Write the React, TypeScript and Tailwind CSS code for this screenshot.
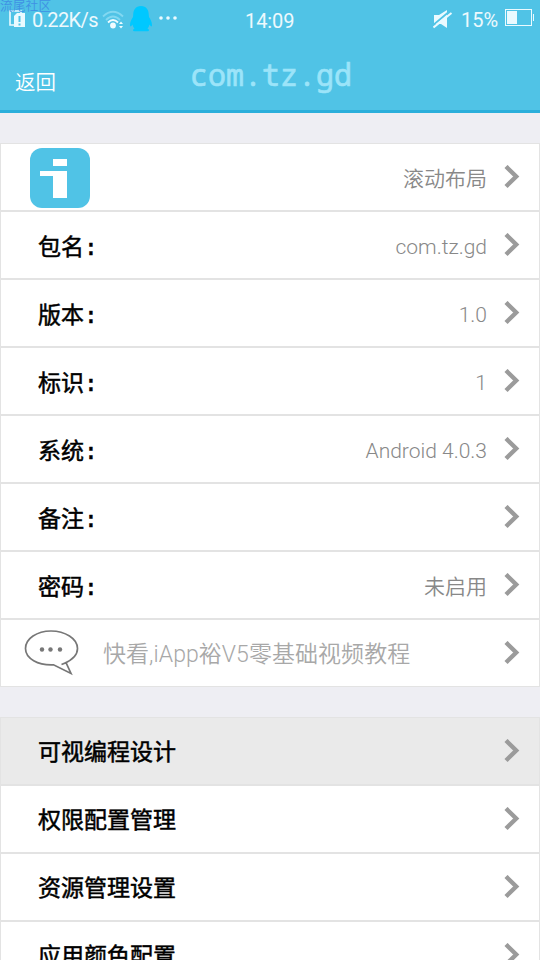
import React from "react";
import clsx from "clsx";

type Row = { label: string; value?: string; active?: boolean };

const infoRows: Row[] = [
  { label: "包名", value: "com.tz.gd" },
  { label: "版本", value: "1.0" },
  { label: "标识", value: "1" },
  { label: "系统", value: "Android 4.0.3" },
  { label: "备注" },
  { label: "密码", value: "未启用" },
];

const menuRows: Row[] = [
  { label: "可视编程设计", active: true },
  { label: "权限配置管理" },
  { label: "资源管理设置" },
  { label: "应用颜色配置" },
];

function Chevron() {
  return (
    <svg className="h-6 w-4 shrink-0" viewBox="0 0 16 24" fill="none" stroke="#9b9b9b" strokeWidth="4.4">
      <path d="M2 1.500 12.200 11.500 2 21.500" />
    </svg>
  );
}

function ListRow({ active, children }: { active?: boolean; children: React.ReactNode }) {
  return (
    <div
      className={clsx(
        "flex h-[68px] shrink-0 items-center border border-[#e3e3e3] pr-[19px]",
        active ? "bg-[#eaeaea]" : "bg-white"
      )}
    >
      {children}
      <Chevron />
    </div>
  );
}

function Label({ children }: { children: React.ReactNode }) {
  return (
    <span className="ml-[37px] flex-1 pt-[4px] text-[23px] leading-7 text-black [-webkit-text-stroke:0.5px_#000]">
      {children}
    </span>
  );
}

function Value({ children }: { children: React.ReactNode }) {
  return <span className="mr-[17px] pt-[4px] text-[21px] leading-7 font-[350] text-[#888]">{children}</span>;
}

function StatusBar() {
  return (
    <div className="relative flex h-10 items-center text-[20px] leading-6 text-white/90">
      {/* SIM card with an alert mark */}
      <svg className="mt-[-3px] ml-[9px] h-[18px] w-[17px]" viewBox="0 0 17 18" fill="none">
        <path d="M12 3V1H1v14h4" stroke="#eafaff" strokeWidth="1.6" />
        <path d="M8 3h8v14H5V6z" fill="#eafaff" />
        <path d="M10.5 6v6M10.5 13.5v2" stroke="#50c3e6" strokeWidth="2" />
      </svg>
      <span className="ml-1.5 w-[68px] whitespace-nowrap tracking-[-0.6px]">0.22K/s</span>
      <svg className="ml-0.5 h-5 w-6" viewBox="0 0 24 20" fill="none">
        <path d="M1 6.5Q11 -3 21 6.5" stroke="#82d8f1" strokeWidth="1.8" />
        <path d="M4 10Q11 3 18 10" stroke="#82d8f1" strokeWidth="1.8" />
        <path d="M6 12.500Q11 7.500 16 12.500" stroke="#f0fcff" strokeWidth="1.8" />
        <circle cx="11" cy="15.5" r="2.9" fill="#f0fcff" />
        <path d="M17 14 19 11.500 21 14zM17 16h4l-2 2.500z" fill="#f0fcff" />
      </svg>
      <svg className="mt-[-3px] ml-[3px] h-[26px] w-6" viewBox="0 0 24 26" fill="#00c8ff">
        <path d="M12 0C6.500 0 4.200 4 4.200 9L4 11C2.500 13 1 16 1 19c0 2 1 2 2.500-.5.300 1.500 1 3 2 4C3.500 23.500 3.500 25.300 5.500 25.300h13c2 0 2-1.800 0-2.800 1-1 1.700-2.500 2-4C22 21 23 21 23 19c0-3-1.500-6-3-8l-.2-2C19.800 4 17.500 0 12 0z" />
      </svg>
      <svg className="mt-[-4px] ml-[5px] h-1 w-5" viewBox="0 0 20 4" fill="#eafaff">
        <circle cx="3" cy="2" r="1.800" />
        <circle cx="10" cy="2" r="1.800" />
        <circle cx="17" cy="2" r="1.800" />
      </svg>
      <span className="ml-[67px] pt-0.5 tracking-[-0.1px]">14:09</span>
      <div className="ml-auto flex items-center pr-[5px]">
        <svg className="mt-[-3px] h-5 w-5" viewBox="0 0 20 20" fill="#eafaff">
          <path d="M1 6h5l8-5v18l-6-4H1z" />
          <path d="M-.5 16.500 17.500 1.500" stroke="#50c3e6" strokeWidth="1.800" />
          <path d="M.5 18.500 18.500 4" stroke="#eafaff" strokeWidth="2" />
        </svg>
        <span className="ml-2 w-[38px] whitespace-nowrap">15%</span>
        <svg className="mt-[-4px] ml-1.5 h-[18px] w-[30px]" viewBox="0 0 30 18" fill="none">
          <rect x="0.500" y="0.500" width="26" height="16" stroke="#eafaff" />
          <rect x="2" y="2" width="10" height="13" fill="#eafaff" />
          <path d="M28.500 5v7" stroke="#eafaff" />
        </svg>
      </div>
      <span className="absolute top-[-2px] left-0 text-[12.8px] leading-4 font-[350] text-[#3f91e4]">流尾社区</span>
    </div>
  );
}

export default function App() {
  return (
    <div className="flex h-[960px] w-[540px] flex-col overflow-hidden bg-[#eeeef3] font-['Roboto','Noto_Sans_CJK_SC',sans-serif]">
      <header className="h-[113px] shrink-0 border-b-[3px] border-[#2bafdb] bg-[#50c3e6]">
        <StatusBar />
        <div className="grid h-[70px] grid-cols-[182px_1fr_180px] items-center">
          <span className="pt-[16px] pl-[15px] text-[20.5px] font-[350] text-white">返回</span>
          <h1 className="text-center font-['Noto_Sans_Mono','DejaVu_Sans_Mono',monospace] text-[30px] leading-9 text-[#9ce4f9] [-webkit-text-stroke:0.7px_#9ce4f9]">
            com.tz.gd
          </h1>
        </div>
      </header>

      <section className="mt-[30px] flex shrink-0 flex-col">
        <ListRow>
          <div className="ml-[29px] flex-1 pt-[2px]">
            <svg className="size-[60px]" viewBox="0 0 60 60">
              <rect width="60" height="60" rx="12" fill="#50c3e6" />
              <path d="M23 11h14v7H23zM10 23h27v27H23V28H10z" fill="#fff" />
            </svg>
          </div>
          <Value>滚动布局</Value>
        </ListRow>
        {infoRows.map((row) => (
          <ListRow key={row.label}>
            <Label>
              {row.label}
              <span className="font-['DejaVu_Sans_Mono',monospace]">:</span>
            </Label>
            {row.value && <Value>{row.value}</Value>}
          </ListRow>
        ))}
        <ListRow>
          <svg className="mt-[-2px] ml-[22px] h-12 w-14" viewBox="0 0 56 48" fill="none" stroke="#777" strokeWidth="1.700">
            <path d="M41 35.500C47 33 54.500 28 54.500 20.500 54.500 10.500 42 3 28 3S2.500 10.500 2.500 20.500 15 37.500 30.500 36.800L48 45.500 43 34.700 38.500 36.500" />
            <g fill="#777" stroke="none">
              <circle cx="19" cy="21.500" r="2.200" />
              <circle cx="27.500" cy="21.500" r="2.200" />
              <circle cx="37" cy="21.500" r="2.200" />
            </g>
          </svg>
          <span className="ml-6 flex-1 pt-[4px] text-[23px] leading-7 font-[350] tracking-[0.05px] text-[#a8a8a8]">
            快看,iApp裕V5零基础视频教程
          </span>
        </ListRow>
      </section>

      <section className="mt-[30px] flex shrink-0 flex-col">
        {menuRows.map((row) => (
          <ListRow key={row.label} active={row.active}>
            <Label>{row.label}</Label>
          </ListRow>
        ))}
      </section>
    </div>
  );
}
